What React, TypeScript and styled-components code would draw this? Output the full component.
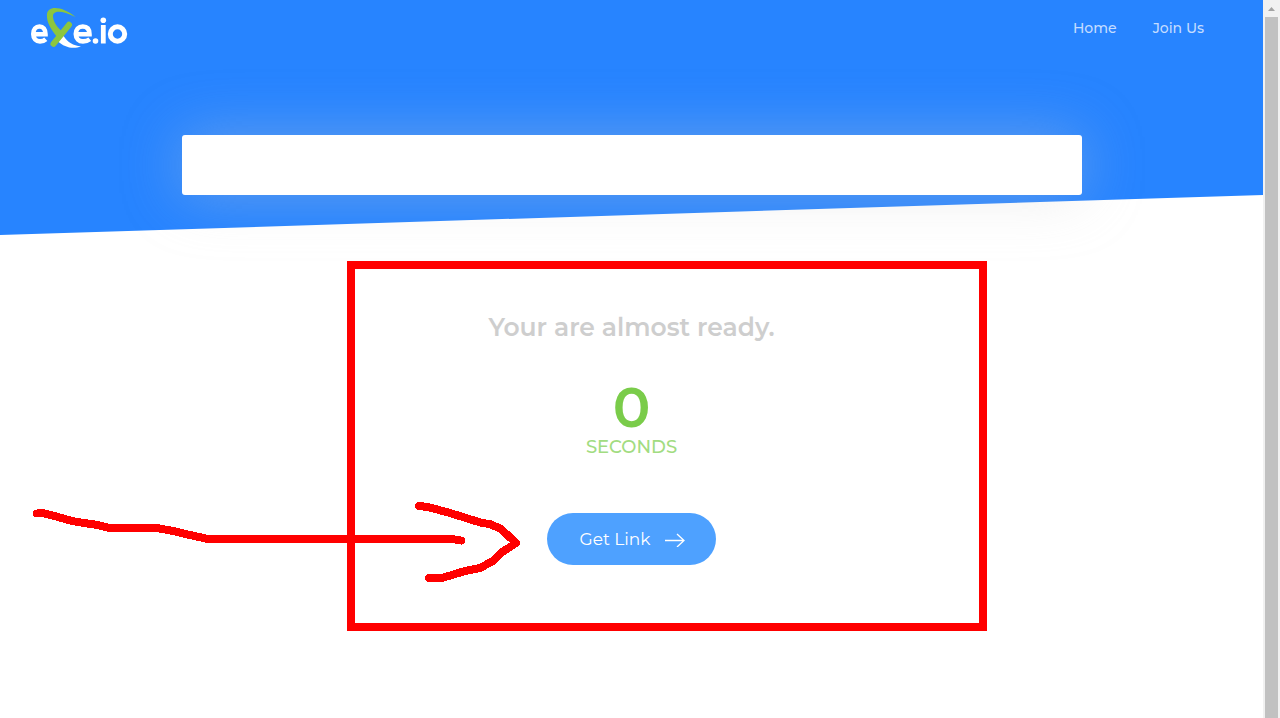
import React from "react";
import styled, { createGlobalStyle } from "styled-components";

const GlobalStyle = createGlobalStyle`
  *, *::before, *::after { box-sizing: border-box; }
  body {
    margin: 0;
    background: #fff;
    font-family: Montserrat, Inter, sans-serif;
  }
`;

const Shell = styled.div`
  display: grid;
  grid-template-columns: minmax(0, 1fr) 17px;
  min-height: 100vh;
`;

const Page = styled.div`
  position: relative;
`;

const Hero = styled.header`
  position: relative;
  height: 235px;

  &::before {
    content: "";
    position: absolute;
    inset: 0;
    background: #2784ff;
    clip-path: polygon(0 0, 100% 0, 100% 195px, 0 100%);
  }
`;

const TopBar = styled.div`
  position: relative;
  display: flex;
  align-items: center;
  justify-content: space-between;
  height: 56px;
  padding: 0 59px 0 28px;
`;

const LogoLink = styled.a`
  display: block;
  height: 48px;
`;

const Nav = styled.nav`
  display: flex;
  gap: 36px;
`;

const NavLink = styled.a`
  font-size: 14px;
  line-height: 20px;
  font-weight: 500;
  color: #c4dcff;
  text-decoration: none;
`;

const Banner = styled.div`
  position: relative;
  width: 900px;
  max-width: 90%;
  height: 60px;
  margin: 79px auto 0;
  background: #fff;
  border-radius: 3px;
  box-shadow: 0 0 60px rgba(206, 206, 206, 0.38);
`;

const Content = styled.main`
  display: flex;
  flex-direction: column;
  align-items: center;
  padding: 76px 16px 40px;
`;

const Title = styled.h1`
  margin: 0;
  font-size: 25px;
  line-height: 32px;
  font-weight: 600;
  color: #cecece;
`;

const Countdown = styled.div`
  display: flex;
  flex-direction: column;
  align-items: center;
  margin-top: 36px;
`;

const Count = styled.span`
  font-size: 56px;
  line-height: 56px;
  font-weight: 600;
  color: #7acc4a;
`;

const Unit = styled.span`
  font-size: 18px;
  line-height: 24px;
  font-weight: 500;
  color: #a2dc81;
`;

const GetLink = styled.button`
  display: flex;
  align-items: center;
  gap: 14px;
  height: 52px;
  margin-top: 54px;
  padding: 0 31px 0 32px;
  border: 0;
  border-radius: 26px;
  background: #4ea1ff;
  color: #fff;
  font: inherit;
  font-size: 17px;
  line-height: 24px;
  cursor: pointer;
`;

const Markup = styled.svg`
  position: absolute;
  top: 0;
  left: 0;
  pointer-events: none;
`;

const ScrollTrack = styled.div`
  display: flex;
  flex-direction: column;
  padding: 0 2px;
  background: #f1f1f1;
`;

const ScrollArrow = styled.svg`
  flex: none;
`;

const ScrollThumb = styled.div`
  flex: 1;
  background: #c1c1c1;
`;

const Logo = () => (
  <svg width="104" height="48" viewBox="28 4 104 48" role="img" aria-label="exe.io">
    <g fill="none" stroke="#fff" strokeWidth="4.600">
      <path d="M33.500 34.300H45.500C45.500 29 43 26.500 39.500 26.500C35.800 26.500 33.300 29.500 33.300 34C33.300 38.800 36 41.400 40 41.400C42.500 41.400 44.300 40.600 45.800 39.200" />
      <path d="M76 34.300H89.500C89.500 29 87 26.500 82.800 26.500C78.500 26.500 75.800 29.500 75.800 34C75.800 38.800 79 41.400 83 41.400C86 41.400 88 40.600 89.800 39.200" />
      <circle cx="117.500" cy="34" r="7.200" strokeWidth="5" />
      <path d="M103.300 25V43.500" strokeWidth="4.800" />
    </g>
    <circle cx="103.300" cy="20.300" r="2.800" fill="#fff" />
    <circle cx="95.500" cy="41" r="2.800" fill="#fff" />
    <path d="M63.500 36C68 42.500 73 45.500 81 46.300C73 49.800 64 47 58 41.500Z" fill="#fff" />
    <path d="M69 24.800L53.500 43.800" fill="none" stroke="#8cc63f" strokeWidth="6" strokeLinecap="round" />
    <path d="M62.500 32C56 26 53.200 21 53 16.500C53 10 62 10.500 75.500 17C64 7 47.300 4 46.900 15C46.800 22 50 28 57 37Z" fill="#8cc63f" />
  </svg>
);

const App = () => (
  <>
    <GlobalStyle />
    <Shell>
      <Page>
        <Hero>
          <TopBar>
            <LogoLink href="#home"><Logo /></LogoLink>
            <Nav>
              <NavLink href="#home">Home</NavLink>
              <NavLink href="#join">Join Us</NavLink>
            </Nav>
          </TopBar>
          <Banner />
        </Hero>
        <Content>
          <Title>Your are almost ready.</Title>
          <Countdown>
            <Count>0</Count>
            <Unit>SECONDS</Unit>
          </Countdown>
          <GetLink type="button">
            Get Link
            <svg width="20" height="16" viewBox="0 0 20 16" fill="none" stroke="#fff" strokeWidth="1.300" aria-hidden="true">
              <path d="M0 9.500H19M12 3L19 9.500L12 16" />
            </svg>
          </GetLink>
        </Content>
        <Markup width="1000" height="640" viewBox="0 0 1000 640" fill="none" stroke="#f00" strokeWidth="8" shapeRendering="crispEdges" aria-hidden="true">
          <rect x="351" y="265" width="632" height="362" />
          <g strokeLinecap="round" strokeLinejoin="round">
            <path d="M37 513.500L43 513L58 517L72 521L84 523L98 525L109 528H157L173 531L190 535L208 539H452L461 540.500" />
            <path d="M419 506L428 507L450 513L482 523L490 524L501 529L516 543L501 553L493 561L480 568L465 571L442 578H429" />
          </g>
        </Markup>
      </Page>
      <ScrollTrack aria-hidden="true">
        <ScrollArrow width="13" height="17" viewBox="2 0 13 17">
          <path d="M5 11L8.500 7L12 11Z" fill="#a3a3a3" />
        </ScrollArrow>
        <ScrollThumb />
      </ScrollTrack>
    </Shell>
  </>
);

export default App;
